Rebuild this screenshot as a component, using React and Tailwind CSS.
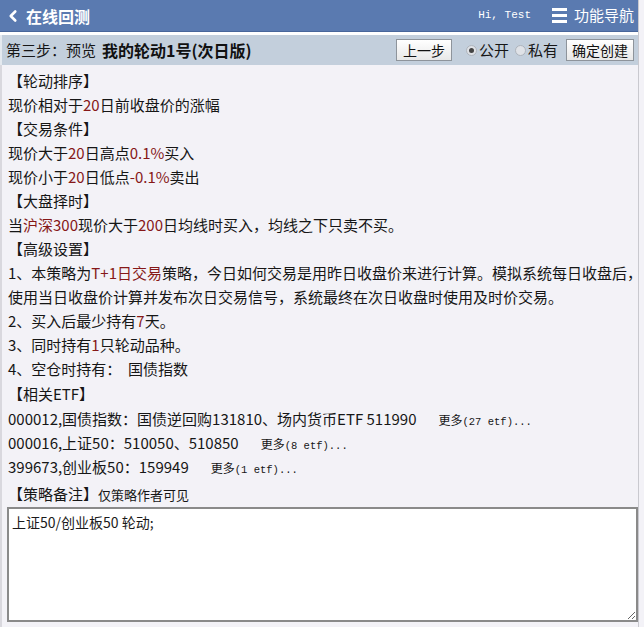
import { ChevronLeft } from 'lucide-react';

const red = 'text-[#861818]';

function Radio({ checked }) {
  return (
    <span className="inline-flex w-[11px] h-[11px] rounded-full bg-[#dfe2e7] border border-[#aeb4bc] items-center justify-center">
      {checked && <span className="w-[5px] h-[5px] rounded-full bg-[#444]" />}
    </span>
  );
}

function Btn({ children, className = '' }) {
  return (
    <button
      className={`h-[22px] border border-[#8e949b] bg-gradient-to-b from-white to-[#e8e8e8] text-[14px] leading-[20px] text-[#111] ${className}`}
    >
      {children}
    </button>
  );
}

function Line({ children, className = '' }) {
  return <div className={`h-6 leading-6 whitespace-nowrap ${className}`}>{children}</div>;
}

function More({ n }) {
  return (
    <span className="ml-[22px] text-[12px]">
      更多
      <span className="text-[10.5px]" style={{ fontFamily: '"Liberation Mono", monospace' }}>
        ({n} etf)...
      </span>
    </span>
  );
}

export default function App() {
  return (
    <div
      className="w-[644px] h-[627px] bg-[#f3f2f7] overflow-hidden text-[15px] text-[#161616]"
      style={{ fontFamily: '"Noto Sans CJK SC", "Noto Sans", sans-serif' }}
    >
      <div className="w-[639px] h-full flex flex-col border-r border-[#c9c9cf]">
        {/* top bar */}
        <div className="h-[32px] bg-[#5a7ab0] border-b border-[#48669a] flex items-center text-white shrink-0">
          <ChevronLeft size={18} strokeWidth={3.5} className="ml-[4px]" />
          <span className="ml-[4px] text-[16px] font-bold">在线回测</span>
          <span
            className="ml-auto text-[11px]"
            style={{ fontFamily: '"Liberation Mono", monospace' }}
          >
            Hi, Test
          </span>
          <span className="ml-[21px] flex flex-col gap-[3px]">
            <span className="block w-[15px] h-[3px] bg-white" />
            <span className="block w-[15px] h-[3px] bg-white" />
            <span className="block w-[15px] h-[3px] bg-white" />
          </span>
          <span className="ml-[7px] mr-[4px] text-[15px]">功能导航</span>
        </div>
        <div className="h-[3px] bg-white shrink-0" />
        {/* step bar */}
        <div className="h-[30px] bg-[#c3cfdc] flex items-center pl-[6px] pr-[4px] shrink-0 border-l-2 border-[#e4e9ef]">
          <span className="text-[15px] -ml-[2px]">第三步：预览</span>
          <span className="ml-[6px] text-[16px] font-bold text-[#111]">我的轮动1号(次日版)</span>
          <Btn className="ml-auto w-[56px]">上一步</Btn>
          <span className="ml-[14px] flex items-center gap-[2px]">
            <Radio checked />
            <span>公开</span>
          </span>
          <span className="ml-[6px] flex items-center gap-[2px]">
            <Radio />
            <span>私有</span>
          </span>
          <Btn className="ml-[8px] w-[68px]">确定创建</Btn>
        </div>
        {/* content */}
        <div className="flex-1 flex flex-col pl-[6px] pt-[4px] border-l-2 border-[#d9d8de]">
          <Line>【轮动排序】</Line>
          <Line>现价相对于<span className={red}>20</span>日前收盘价的涨幅</Line>
          <Line>【交易条件】</Line>
          <Line>现价大于<span className={red}>20</span>日高点<span className={red}>0.1%</span>买入</Line>
          <Line>现价小于<span className={red}>20</span>日低点<span className={red}>-0.1%</span>卖出</Line>
          <Line>【大盘择时】</Line>
          <Line>
            当<span className={red}>沪深300</span>现价大于<span className={red}>200</span>日均线时买入，均线之下只卖不买。
          </Line>
          <Line>【高级设置】</Line>
          <Line>
            1、本策略为<span className={red}>T+1日交易</span>策略，今日如何交易是用昨日收盘价来进行计算。模拟系统每日收盘后，
          </Line>
          <Line>使用当日收盘价计算并发布次日交易信号，系统最终在次日收盘时使用及时价交易。</Line>
          <Line>2、买入后最少持有<span className={red}>7</span>天。</Line>
          <Line>3、同时持有<span className={red}>1</span>只轮动品种。</Line>
          <Line>4、空仓时持有：&nbsp;&nbsp;国债指数</Line>
          <Line className="mt-[1px]">【相关ETF】</Line>
          <Line className="mt-[1px]">
            000012,国债指数：国债逆回购131810、场内货币ETF 511990
            <More n="27" />
          </Line>
          <Line>
            000016,上证50：510050、510850
            <More n="8" />
          </Line>
          <Line>
            399673,创业板50：159949
            <More n="1" />
          </Line>
          <Line className="mt-[3px]">
            【策略备注】<span className="text-[13px]">仅策略作者可见</span>
          </Line>
          <textarea
            className="mt-[1px] ml-[-1px] w-[631px] h-[115px] bg-white border-2 border-[#8a8a8a] px-[3px] py-[1px] text-[14px] leading-6 text-[#1a1a1a] outline-none resize"
            defaultValue="上证50/创业板50 轮动;"
          />
        </div>
      </div>
    </div>
  );
}
